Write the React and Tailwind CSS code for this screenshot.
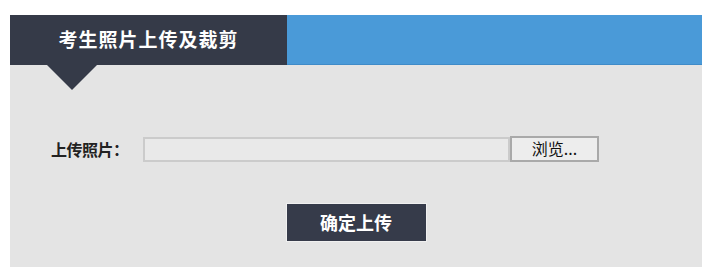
import React from 'react';

const cjk = { fontFamily: '"Noto Sans CJK SC", "Noto Sans", sans-serif' };

export default function App() {
  return (
    <div className="w-[720px] h-[277px] bg-white pt-[15px] pl-[10px]" style={cjk}>
      <div className="w-[692px]">
        {/* header */}
        <div className="relative flex h-[50px]">
          <div className="w-[277px] bg-[#353a48] flex items-center justify-center pb-[2px]">
            <span className="text-white text-[19px] font-bold tracking-[1px]">考生照片上传及裁剪</span>
          </div>
          <div className="flex-1 bg-[#4a9ad8] border-b border-[#3f8bc8]" />
          <div className="absolute left-[37px] top-[50px] w-0 h-0 border-l-[25px] border-r-[25px] border-t-[25px] border-l-transparent border-r-transparent border-t-[#353a48]" />
        </div>

        {/* body */}
        <div className="bg-[#e4e4e4] h-[202px] flex flex-col">
          <div className="flex items-center mt-[71px] h-[26px]">
            <span className="ml-[41px] w-[92px] text-[16px] font-bold text-[#222] tracking-[-0.5px]">上传照片：</span>
            <div className="w-[367px] h-[25px] border-2 border-[#cbcbcb] bg-[#e9e9e9]" />
            <button className="w-[89px] h-[26px] border-2 border-[#a9a9a9] bg-[#ededed] text-[16px] text-[#111] leading-none flex items-center justify-center pb-[2px]">
              浏览...
            </button>
          </div>
          <div className="flex justify-center mt-[41px]">
            <button className="w-[141px] h-[39px] bg-[#363b4a] border border-[#f0f0f0] text-white text-[18px] font-bold flex items-center justify-center">
              确定上传
            </button>
          </div>
        </div>
      </div>
    </div>
  );
}
